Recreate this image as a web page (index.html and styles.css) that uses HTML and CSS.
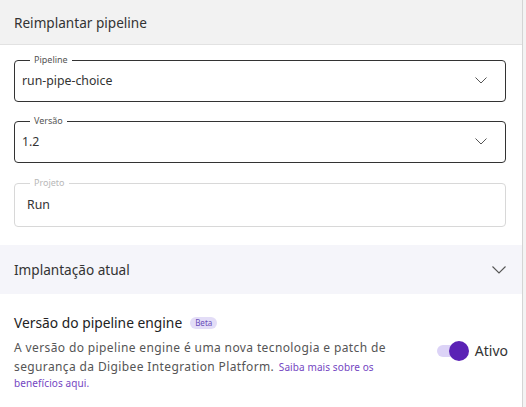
FILE: index.html
```html
<!DOCTYPE html>
<html lang="pt">
<head>
<meta charset="utf-8">
<link rel="stylesheet" href="styles.css">
</head>
<body>
<div class="panel">
  <header class="header">Reimplantar pipeline</header>
  <div class="fields">
    <fieldset class="field">
      <legend>Pipeline</legend>
      <div class="field-row">
        <span class="value">run-pipe-choice</span>
        <svg class="chev" viewBox="0 0 12 7" width="12" height="7"><path d="M0.5 0.5l5.5 5.5 5.5-5.5" fill="none" stroke="#555" stroke-width="1"/></svg>
      </div>
    </fieldset>
    <fieldset class="field">
      <legend>Versão</legend>
      <div class="field-row">
        <span class="value">1.2</span>
        <svg class="chev" viewBox="0 0 12 7" width="12" height="7"><path d="M0.5 0.5l5.5 5.5 5.5-5.5" fill="none" stroke="#555" stroke-width="1"/></svg>
      </div>
    </fieldset>
    <fieldset class="field disabled">
      <legend>Projeto</legend>
      <div class="field-row">
        <span class="value">Run</span>
      </div>
    </fieldset>
  </div>
  <div class="accordion">
    <span>Implantação atual</span>
    <svg class="chev" viewBox="0 0 14 8" width="14" height="8"><path d="M0.5 0.5l6.5 6.5 6.5-6.5" fill="none" stroke="#555" stroke-width="1.1"/></svg>
  </div>
  <div class="engine">
    <div class="engine-title">Versão do pipeline engine <span class="badge">Beta</span></div>
    <div class="engine-body">
      <p class="desc"><span class="desc-text">A versão do pipeline engine é uma nova tecnologia e patch de segurança da Digibee Integration Platform.</span> <a class="link" href="#">Saiba mais sobre os benefícios aqui.</a></p>
      <div class="toggle-wrap">
        <span class="toggle"><span class="knob"></span></span>
        <span class="toggle-label">Ativo</span>
      </div>
    </div>
  </div>
</div>
</body>
</html>
```

FILE: styles.css
```css
html, body {
  margin: 0;
  padding: 0;
}
body {
  background: #f3f3f3;
  font-family: "Noto Sans", "Open Sans", sans-serif;
  color: #333;
  width: 526px;
  height: 407px;
  overflow: hidden;
}
.panel {
  width: 522px;
  height: 407px;
  background: #fff;
  border-right: 1px solid #d4d4d4;
}
.header {
  height: 45px;
  box-sizing: border-box;
  background: #f2f2f2;
  border-bottom: 1px solid #e2e2e2;
  padding: 14px 14px 0;
  font-size: 13.6px;
  line-height: 18px;
  color: #333;
}
.fields {
  padding: 10px 16px 18px 14px;
  display: flex;
  flex-direction: column;
  gap: 14px;
}
.field {
  margin: 0;
  padding: 0 18px 0 7px;
  border: 1px solid #333;
  border-radius: 4px;
  height: 47px;
  box-sizing: border-box;
}
.field legend {
  margin-left: 8px;
  padding: 0 4px;
  font-size: 9px;
  line-height: 10px;
  color: #555;
}
.field.disabled {
  border-color: #d8d8d8;
  height: 49px;
  margin-top: 1px;
}
.field.disabled legend {
  color: #b8b8b8;
}
.field.disabled .field-row {
  padding-left: 5px;
  height: 33px;
}
.field-row {
  display: flex;
  align-items: center;
  justify-content: space-between;
  height: 30px;
}
.value {
  font-size: 12.3px;
  color: #333;
}
.chev {
  display: block;
}
.accordion {
  background: #f5f5fa;
  height: 49px;
  display: flex;
  align-items: center;
  justify-content: space-between;
  padding: 0 16px 0 14px;
  font-size: 13.6px;
  color: #333;
}
.engine {
  padding: 20px 14px 0;
}
.engine-title {
  font-size: 13.8px;
  line-height: 18px;
  color: #222;
  display: flex;
  align-items: center;
  gap: 8px;
}
.badge {
  background: #e3ddf7;
  color: #6a4db8;
  font-size: 8px;
  line-height: 12px;
  padding: 0 5px;
  border-radius: 6px;
}
.engine-body {
  display: flex;
  align-items: flex-start;
  justify-content: space-between;
  margin-top: 6px;
}
.desc {
  margin: 0;
  width: 400px;
  font-size: 10px;
  line-height: 15px;
  color: #555;
}
.desc-text {
  font-size: 12px;
  line-height: 19px;
  letter-spacing: 0.38px;
}
.link {
  color: #7446c2;
  font-size: 10px;
  line-height: 15px;
  letter-spacing: 0.1px;
  margin-left: 2px;
  text-decoration: none;
}
.toggle-wrap {
  display: flex;
  align-items: center;
  gap: 6px;
  margin-top: 3px;
}
.toggle {
  position: relative;
  width: 28px;
  height: 12px;
  border-radius: 6px;
  background: #dcd3f7;
  margin-right: 4px;
}
.knob {
  position: absolute;
  right: -4px;
  top: -4px;
  width: 20px;
  height: 20px;
  border-radius: 50%;
  background: #5b22b5;
}
.toggle-label {
  font-size: 14px;
  color: #333;
}
```
